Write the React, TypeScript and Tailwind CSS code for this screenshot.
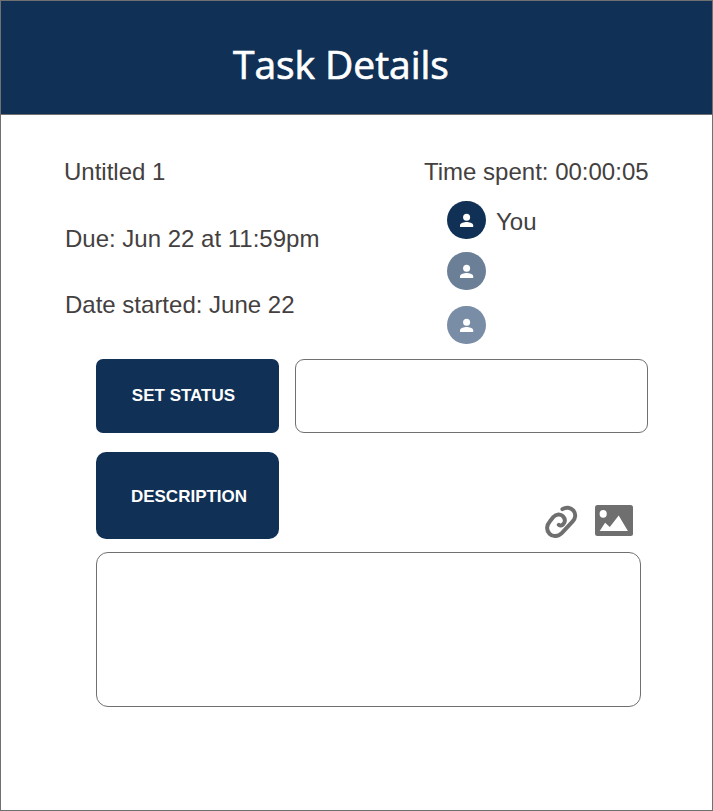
import React from "react";

function Avatar({ className }: { className: string }) {
  return (
    <div className={`h-[38px] w-[39px] shrink-0 rounded-full ${className}`}>
      <svg viewBox="0 0 39 38" className="h-[38px] w-[39px]" fill="white">
        <circle cx="19.6" cy="16.3" r="3.5" />
        <path d="M13 26v-1.9c0-2.3 4.4-3.2 6.6-3.2s6.6.9 6.6 3.2V26z" />
      </svg>
    </div>
  );
}

function LinkIcon() {
  return (
    <svg viewBox="0 0 33 35" className="h-[35px] w-[33px]" fill="none" stroke="#6f6f6f" strokeWidth="4" strokeLinecap="round">
      <path d="M17.4 4.2C21 1.8 25.8 2.3 28.4 5.6C31.1 9.1 30.6 13.2 27.7 16.3L17 27.8C12.9 32 7.7 32 4.6 28.8C1.3 25.4 1.2 20.4 4.6 16.8L8.3 12C11.3 8.7 15.7 8.7 18.1 11.3C20.5 13.9 20.4 17.2 18.2 19.2C16.7 20.6 14.7 21.1 13.8 19.9" />
    </svg>
  );
}

function ImageIcon() {
  return (
    <svg viewBox="0 0 38 31" className="h-[31px] w-[38px]">
      <rect width="38" height="31" rx="2.5" fill="#6f6f6f" />
      <ellipse cx="8.2" cy="8.8" rx="3.6" ry="3.9" fill="white" />
      <path d="M4.7 26L10.1 17.7L14.8 21.9L23.7 10.5L32.9 26z" fill="white" />
    </svg>
  );
}

export default function App() {
  return (
    <main className="h-[811px] w-[713px] border border-[#707070] bg-white font-['Liberation_Sans',Arial,sans-serif] text-[24px] leading-7 text-[#444040]">
      <header className="h-[114px] border-b border-[#707070] bg-[#103055] pt-[37px] pl-[232px]">
        <h1 className="w-max font-['Open_Sans','Noto_Sans',sans-serif] text-[39px] leading-[52px] tracking-[-0.05px] text-white [-webkit-text-stroke:0.7px_white]">Task Details</h1>
      </header>
      <section className="flex h-[244px] pt-[43px] pl-[64px]">
        <div className="flex w-[359px] flex-col">
          <p className="-ml-px h-[67px]">Untitled 1</p>
          <p className="h-[66px]">Due: Jun 22 at 11:59pm</p>
          <p>Date started: June 22</p>
        </div>
        <div>
          <p className="h-[43px] whitespace-nowrap">Time spent: 00:00:05</p>
          <div className="flex flex-col pl-[23px]">
            <div className="flex h-[51px] gap-[10px]">
              <Avatar className="bg-[#103055]" />
              <span className="pt-[7px]">You</span>
            </div>
            <div className="h-[54px]"><Avatar className="bg-[#6b7f97]" /></div>
            <Avatar className="bg-[#7a8da6]" />
          </div>
        </div>
      </section>
      <section className="flex gap-4 pl-[95px]">
        <button className="h-[74px] w-[183px] rounded-[7px] bg-[#103055] pr-2 text-[17px] font-bold text-white">SET STATUS</button>
        <div className="h-[74px] w-[353px] rounded-[9px] border border-[#707070]" />
      </section>
      <section className="mt-[19px] flex pl-[95px]">
        <button className="h-[87px] w-[183px] rounded-[10px] bg-[#103055] pt-[2px] pl-[3px] text-[17px] font-bold text-white">DESCRIPTION</button>
        <div className="ml-[266px] flex h-[87px] gap-[17px] pt-[53px]">
          <LinkIcon />
          <ImageIcon />
        </div>
      </section>
      <div className="mt-[13px] ml-[95px] h-[155px] w-[545px] rounded-[12px] border border-[#707070]" />
    </main>
  );
}
